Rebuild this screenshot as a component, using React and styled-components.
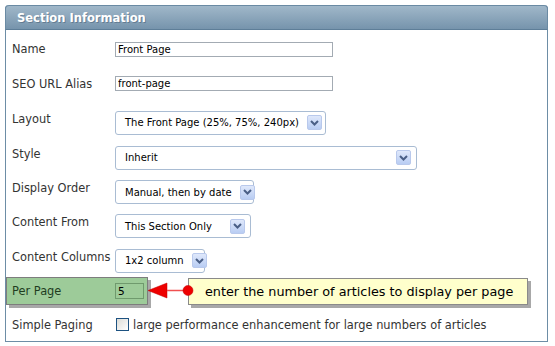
import styled, { createGlobalStyle } from "styled-components";

const GlobalStyle = createGlobalStyle`
  html, body {
    margin: 0;
    padding: 0;
    background: #ffffff;
  }
  body {
    font-family: "DejaVu Sans", "Liberation Sans", sans-serif;
  }
`;

const rows = [
  { label: "Name", h: 34, kind: "text", value: "Front Page" },
  { label: "SEO URL Alias", h: 35, kind: "text", value: "front-page" },
  { label: "Layout", h: 35, kind: "select", value: "The Front Page (25%, 75%, 240px)", w: 211, fill: false },
  { label: "Style", h: 35, kind: "select", value: "Inherit", w: 302, fill: true },
  { label: "Display Order", h: 34, kind: "select", value: "Manual, then by date", w: 139, fill: false },
  { label: "Content From", h: 34, kind: "select", value: "This Section Only", w: 136, fill: true },
  { label: "Content Columns", h: 35, kind: "select", value: "1x2 column", w: 90, fill: false },
];

function Chevron() {
  return (
    <svg width="9" height="6" viewBox="0 0 9 6">
      <path d="M1 1 L4.5 4.5 L8 1" fill="none" stroke="#4a5f86" strokeWidth="2" />
    </svg>
  );
}

function FakeSelect({ value, w, fill }) {
  return (
    <SelectBox $w={w}>
      <SelectText $fill={fill}>{value}</SelectText>
      <ArrowButton>
        <Chevron />
      </ArrowButton>
    </SelectBox>
  );
}

export default function App() {
  return (
    <>
      <GlobalStyle />
      <Panel>
        <Header>Section Information</Header>
        <Body>
          {rows.map((r) => (
            <Row key={r.label} $h={r.h}>
              <Label>{r.label}</Label>
              {r.kind === "text" ? (
                <TextInput defaultValue={r.value} />
              ) : (
                <FakeSelect value={r.value} w={r.w} fill={r.fill} />
              )}
            </Row>
          ))}
          <Row $h={34}>
            <Highlight>
              <HiLabel>Per Page</HiLabel>
              <SmallInput defaultValue="5" />
            </Highlight>
            <Pointer width="46" height="28" viewBox="0 0 46 28">
              <polygon points="0,13.5 19,6 19,21" fill="#ee0000" stroke="#c00000" strokeWidth="0.5" />
              <line x1="19" y1="13.5" x2="40" y2="13.5" stroke="#f05050" strokeWidth="1.5" />
              <circle cx="40" cy="13.5" r="5" fill="#ee0000" stroke="#c00000" strokeWidth="0.5" />
            </Pointer>
            <Callout>enter the number of articles to display per page</Callout>
          </Row>
          <Row $h={33}>
            <Label>Simple Paging</Label>
            <CheckLine>
              <Check type="checkbox" />
              large performance enhancement for large numbers of articles
            </CheckLine>
          </Row>
        </Body>
      </Panel>
    </>
  );
}

const Panel = styled.div`
  margin: 5px 0 0 5px;
  width: 543px;
  box-sizing: border-box;
  border: 1px solid #6d8da6;
  border-top: none;
  border-radius: 4px 4px 0 0;
`;

const Header = styled.div`
  height: 25px;
  box-sizing: border-box;
  margin: 0 -1px;
  padding: 0 0 0 11px;
  display: flex;
  align-items: center;
  border-radius: 4px 4px 0 0;
  border: 1px solid #6a8aa3;
  border-bottom-color: #5e7e98;
  background: linear-gradient(#a0b7c9, #7694ac);
  color: #ffffff;
  font-family: "DejaVu Sans", sans-serif;
  font-weight: bold;
  font-size: 11.5px;
  text-shadow: 1px 1px 0 rgba(40, 60, 80, 0.35);
`;

const Body = styled.div`
  padding-top: 2px;
`;

const Row = styled.div`
  display: flex;
  align-items: center;
  height: ${(p) => p.$h}px;
`;

const Label = styled.div`
  width: 109px;
  flex: none;
  box-sizing: border-box;
  padding-left: 6px;
  font-size: 11.4px;
  color: #333333;
  white-space: nowrap;
`;

const TextInput = styled.input`
  width: 218px;
  height: 15px;
  box-sizing: border-box;
  margin: 0;
  padding: 0 2px;
  border: 1px solid #a3abb3;
  font-family: "DejaVu Sans", sans-serif;
  font-size: 10px;
  color: #000000;
  outline: none;
`;

const SelectBox = styled.div`
  width: ${(p) => p.$w}px;
  height: 24px;
  margin-top: 8px;
  box-sizing: border-box;
  display: flex;
  align-items: center;
  padding: 0 5px 0 9px;
  border: 1px solid #a9bcd3;
  border-radius: 3px;
  background: #ffffff;
`;

const SelectText = styled.span`
  flex: ${(p) => (p.$fill ? "1" : "none")};
  margin-right: 8px;
  font-size: 10px;
  color: #000000;
  white-space: nowrap;
`;

const ArrowButton = styled.span`
  width: 15px;
  height: 15px;
  flex: none;
  box-sizing: border-box;
  display: flex;
  align-items: center;
  justify-content: center;
  border: 1px solid #b9c9ec;
  border-radius: 2px;
  background: linear-gradient(#dfe8fb, #b9cdf3);
  margin-left: auto;
`;

const Highlight = styled.div`
  width: 142px;
  height: 28px;
  box-sizing: border-box;
  display: flex;
  align-items: center;
  border: 1px solid #7d7d7d;
  background: #9dcb99;
  box-shadow: 3px 3px 0 #a8a8a8;
`;

const HiLabel = styled.div`
  width: 108px;
  flex: none;
  box-sizing: border-box;
  padding-left: 5px;
  font-size: 11.4px;
  color: #1f3d1f;
`;

const SmallInput = styled.input`
  width: 29px;
  height: 16px;
  box-sizing: border-box;
  margin: 0;
  padding: 0 2px;
  border: 1px solid #6f9a6d;
  background: #9dcb99;
  font-family: "DejaVu Sans", sans-serif;
  font-size: 10.5px;
  color: #000000;
  outline: none;
`;

const Pointer = styled.svg`
  flex: none;
  position: relative;
  z-index: 1;
`;

const Callout = styled.div`
  margin-left: -6px;
  width: 340px;
  height: 27px;
  box-sizing: border-box;
  display: flex;
  align-items: center;
  padding-left: 16px;
  border: 1px solid #8a8a8a;
  background: #ffffcc;
  box-shadow: 3px 3px 0 #a8a8a8;
  font-size: 12.8px;
  color: #000000;
  white-space: nowrap;
`;

const CheckLine = styled.label`
  display: flex;
  align-items: center;
  font-size: 11.4px;
  color: #333333;
  white-space: nowrap;
`;

const Check = styled.input`
  appearance: none;
  width: 13px;
  height: 13px;
  margin: 0 4px 0 1px;
  box-sizing: border-box;
  border: 1px solid #1d5281;
  background: linear-gradient(135deg, #dcdcd7, #ffffff);
`;
